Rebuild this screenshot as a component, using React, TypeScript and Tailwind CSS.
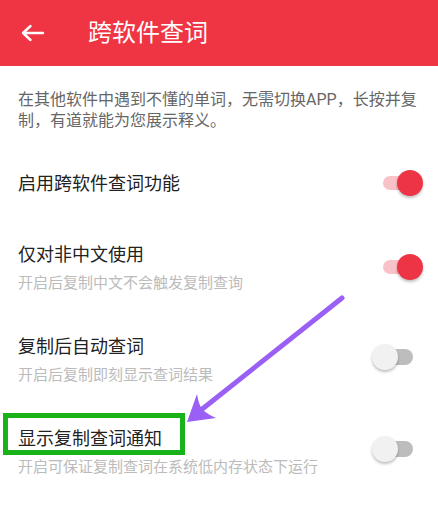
import React from "react";

const font = { fontFamily: 'Roboto, "Noto Sans CJK SC", sans-serif' };

function Switch({ on }: { on: boolean }) {
  if (on) {
    return (
      <div className="flex items-center shrink-0 mb-[2px]">
        <div className="w-[37px] h-[14px] rounded-full bg-[#f8c2c8]" />
        <div className="-ml-[23px] w-[26px] h-[26px] rounded-full bg-[#ec3444] shadow-[0_2px_3px_rgba(0,0,0,0.25)]" />
      </div>
    );
  }
  return (
    <div className="flex items-center shrink-0 mr-[10px] mb-[6px]">
      <div className="relative z-10 w-[26px] h-[26px] rounded-full bg-[#f1f1f1] shadow-[0_2px_3px_rgba(0,0,0,0.25)]" />
      <div className="-ml-[20px] w-[35px] h-[16px] rounded-full bg-[#bdbdbd]" />
    </div>
  );
}

type Row = { title: string; sub: string; on: boolean; marked?: boolean };

const rows: Row[] = [
  { title: "仅对非中文使用", sub: "开启后复制中文不会触发复制查询", on: true },
  { title: "复制后自动查词", sub: "开启后复制即刻显示查词结果", on: false },
  { title: "显示复制查词通知", sub: "开启可保证复制查词在系统低内存状态下运行", on: false, marked: true },
];

export default function App() {
  return (
    <div className="relative w-[438px] h-[516px] bg-white overflow-hidden" style={font}>
      <header className="h-[66px] bg-[#ef3443] flex items-center text-white">
        <svg width="24" height="18" viewBox="0 0 24 18" className="ml-[21px]" fill="none" stroke="white" strokeWidth="2.4" strokeLinecap="round" strokeLinejoin="round">
          <path d="M2 9 H22 M9.5 2 L2 9 L9.5 16" />
        </svg>
        <h1 className="ml-[43px] text-[24px] leading-none">跨软件查词</h1>
      </header>

      <p className="px-[18px] pt-[23px] pb-[15px] text-[16px] leading-[21px] text-[#666666]">
        在其他软件中遇到不懂的单词，无需切换APP，长按并复制，有道就能为您展示释义。
      </p>

      <div className="h-[76px] flex items-center justify-between pl-[18px] pr-[15px]">
        <span className="text-[18px] leading-[24px] text-[#222222]">启用跨软件查词功能</span>
        <Switch on />
      </div>

      {rows.map((r) => (
        <div key={r.title} className="h-[92px] flex items-center justify-between pl-[18px] pr-[15px]">
          <div className="flex flex-col gap-[6px]">
            <span className="relative text-[18px] leading-[24px] text-[#222222]">
              {r.title}
              {r.marked && (
                <span className="absolute -left-[15px] -top-[14px] w-[182px] h-[42px] border-[5px] border-[#19b319]" />
              )}
            </span>
            <span className="text-[15px] leading-[20px] text-[#bbbbbb]">{r.sub}</span>
          </div>
          <Switch on={r.on} />
        </div>
      ))}

      <svg className="absolute inset-0 pointer-events-none" width="438" height="516" viewBox="0 0 438 516">
        <line x1="342" y1="298" x2="196" y2="414" stroke="#9a5ff4" strokeWidth="5" strokeLinecap="round" />
        <path d="M187 422 L197 394 Q199 407 204 411 Q209 415 216 418 Z" fill="#9a5ff4" />
      </svg>
    </div>
  );
}
